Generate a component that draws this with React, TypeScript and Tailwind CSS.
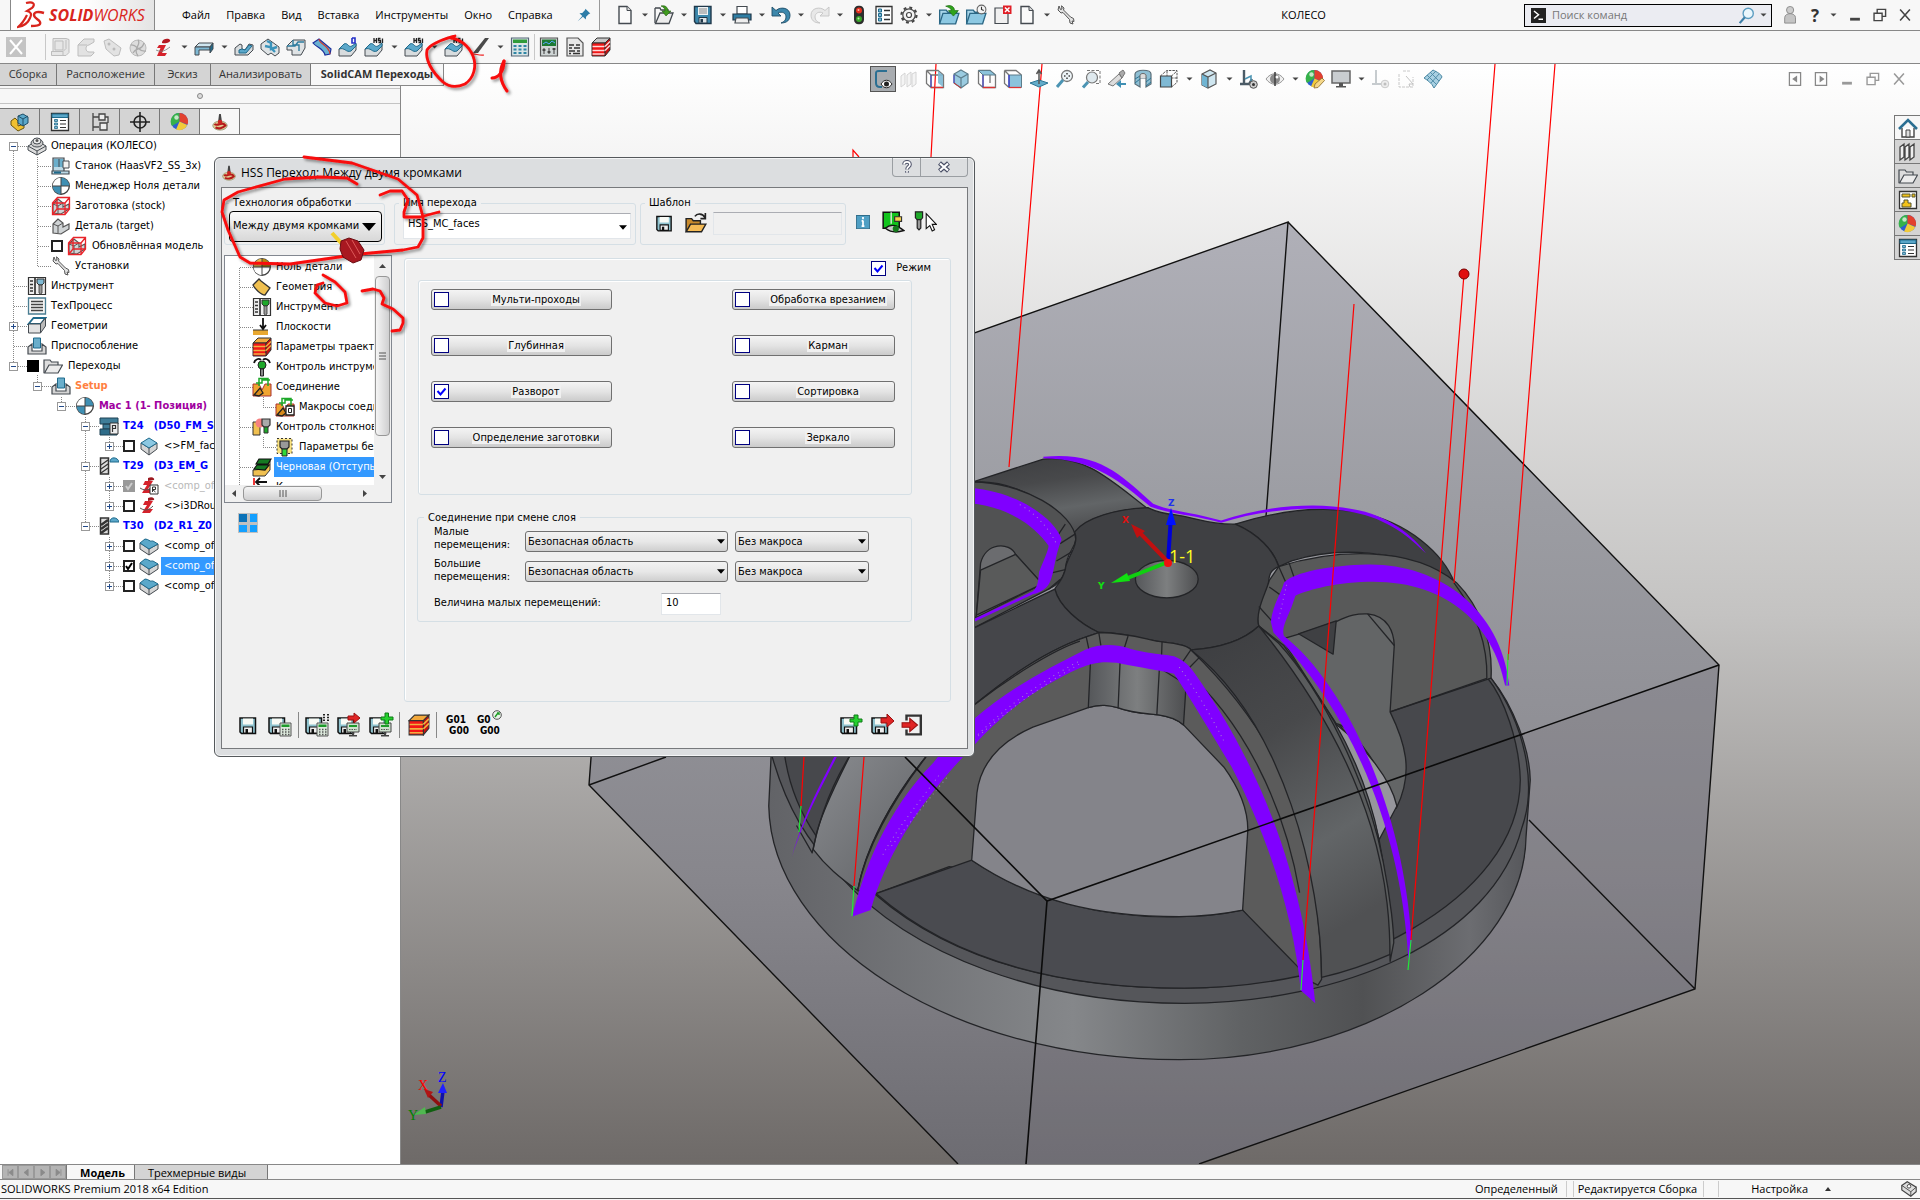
import type { ReactNode } from "react";

const UI = "font-['Open_Sans','Noto_Sans',sans-serif]";
const TAHOMA = "font-['DejaVu_Sans_Condensed','DejaVu_Sans',sans-serif]";

function Ic({ children, w = 20, className = "" }: { children: ReactNode; w?: number; className?: string }) {
  return (
    <svg viewBox="0 0 20 20" width={w} height={w} className={`shrink-0 ${className}`} aria-hidden="true">
      {children}
    </svg>
  );
}

function Caret({ className = "w-2" }: { className?: string }) {
  return (
    <svg viewBox="0 0 8 8" height={8} className={`shrink-0 ${className}`} aria-hidden="true">
      <path d="M1.5 2.5h6l-3 3z" fill="#444" />
    </svg>
  );
}

function Tool({ label, children }: { label: string; children: ReactNode }) {
  return (
    <button type="button" aria-label={label} className="flex shrink-0 items-center justify-center">
      {children}
    </button>
  );
}

const S = "#444a50";
const B = "#7fb9d4";
const D = "#1f6a8c";

/* ---------- toolbar glyphs ---------- */
const NewDoc = () => <Ic><path d="M4 1.5h8l4 4v13H4z" fill="#fafafa" stroke={S} strokeWidth="1.4" /><path d="M12 1.5v4h4" fill="#ddd" stroke={S} /></Ic>;
const OpenDoc = () => <Ic><path d="M1 3h5l1 2h7v3M1 3v15" fill="#eee" stroke={S} strokeWidth="1.3" /><path d="M1.5 18.5 6 8h13l-4 10.5z" fill="#ececec" stroke={S} strokeWidth="1.3" /><path d="M7 1c4-1 7 1 7 5h3l-5 5-4-5h3c0-2-1-4-4-5z" fill="#3f9a1d" stroke="#245c10" strokeWidth=".6" /></Ic>;
const Save = () => <Ic><path d="M1.5 1.5H18v17H3l-1.5-2z" fill="#3c87ab" stroke="#20384a" strokeWidth="1.4" /><path d="M5 2h10v8H5z" fill="#eef2f4" /><path d="M6 4h8M6 6h8M6 8h8" stroke="#888" /><path d="M6 12.5h8V18H6z" fill="#dfe5e8" stroke="#20384a" /><path d="M7.5 14H10v3.5H7.5z" fill="#20384a" /></Ic>;
const Print = () => <Ic><path d="M5 1.5h10V9H5z" fill="#fff" stroke={S} strokeWidth="1.2" /><path d="M1 9h18v6H1z" fill="#2f7ea4" stroke="#20384a" strokeWidth="1.2" /><path d="M4 13h12l1 5H3z" fill="#eee" stroke={S} strokeWidth="1.2" /></Ic>;
const Undo = () => <Ic><path d="M1 2v9h9L7 8c4-2 8 0 8 4 0 3-2 5-5 6 6 0 9-3 9-8C19 3 10 1 5 5.500z" fill="#3c87ab" stroke="#1d4d68" strokeWidth=".9" /></Ic>;
const Redo = () => <Ic className="scale-x-[-1]"><path d="M1 2v9h9L7 8c4-2 8 0 8 4 0 3-2 5-5 6 6 0 9-3 9-8C19 3 10 1 5 5.500z" fill="#e8e8e8" stroke="#c4c4c4" strokeWidth=".9" /></Ic>;
const Traffic = () => <Ic><rect x="5" y=".8" width="10" height="18.5" rx="4.5" fill="#2d2d2d" /><circle cx="10" cy="5.5" r="3" fill="#e8301f" /><circle cx="10" cy="14" r="3" fill="#3aa52a" /><circle cx="9.5" cy="5" r="1" fill="#ffb8a8" /><circle cx="9.5" cy="13.5" r="1" fill="#b8f0a8" /></Ic>;
const ListIc = () => <Ic><path d="M2 1.5h16v17H2z" fill="#fff" stroke="#333" strokeWidth="1.3" /><path d="M4.5 4h3v3h-3zM4.5 8.5h3v3h-3zM4.5 13h3v3h-3z" fill={B} stroke={D} /><path d="M10 5.5h6M10 10h6M10 14.5h6" stroke="#333" strokeWidth="1.3" /></Ic>;
const PropIc = () => <Ic><path d="M1.5 1.5h17v17h-17z" fill="#fff" stroke="#333" strokeWidth="1.3" /><path d="M2 2h16v3.5H2z" fill="#5aa6c8" stroke={D} /><path d="M4.5 7.5h3v2h-3zM4.5 11h3v2h-3zM4.5 14.5h3v2h-3z" fill={B} stroke={D} strokeWidth=".8" /><path d="M10 8.5h6M10 12h6M10 15.5h6" stroke="#333" strokeWidth="1.2" /></Ic>;
const Gear = () => <Ic><circle cx="10" cy="10" r="7.5" fill="none" stroke="#444" strokeWidth="2.2" strokeDasharray="2.9 3" /><circle cx="10" cy="10" r="6.2" fill="#f2f2f2" stroke="#444" strokeWidth="1.2" /><circle cx="10" cy="10" r="2.5" fill="#fff" stroke="#444" strokeWidth="1.2" /></Ic>;
const BlueFolder = ({ kind }: { kind: "arrow" | "clock" }) => (
  <Ic w={22}><path d="M1.5 18V5.5h6l1.5 2h8v3" fill="#a9d6ea" stroke="#2b6785" strokeWidth="1.2" /><path d="m1.5 18 3-9.5H19L16 18z" fill="#8cc8e2" stroke="#2b6785" strokeWidth="1.2" />
    {kind === "arrow" ? <path d="M7 2c4-1.5 8 0 8 4h3.5L14 11 9.500 6H12c0-2-2-3-5-4z" fill="#2fa31c" stroke="#1c6a10" strokeWidth=".6" /> : <g><circle cx="15" cy="5" r="4" fill="#f4f4f4" stroke="#666" /><path d="M15 2.5V5l2 1" fill="none" stroke="#333" /></g>}
  </Ic>
);
const CloseDoc = () => <Ic><path d="M3 3h13v15.5H3z" fill="#f0f0f0" stroke={S} strokeWidth="1.2" /><path d="M11 .5h8.5V9H11z" fill="#e01f26" /><path d="m13 2.5 4.500 4.500m0-4.500L13 7" stroke="#fff" strokeWidth="1.5" /></Ic>;
const Wrench = () => <Ic><path d="M3 1 2 5l3 3 2-.5 6.500 7 .5 3.500 3 1-1-3 2 .5-.5-3-3-1.500L7.500 5 8 3 5.500.8 6 4 4.500 4.500z" fill="#e2e2e2" stroke="#555" strokeWidth="1" /></Ic>;

/* ---------- CAM glyphs ---------- */
const GreyPart = ({ v }: { v: number }) => (
  <Ic>
    {v === 0 && <g><path d="M3 1.5h13l3 1v13l-3 3H1.500v-4H3z" fill="#e6e6e6" stroke="#bdbdbd" /><path d="M5 4h8v9H5zM1.500 14.500H13l3-3V3M13 14.500v4" fill="none" stroke="#bdbdbd" /></g>}
    {v === 1 && <path d="m2 8 6-6h10v3l-5 3c-4 0-4 7 0 7h5v1l-3 3H2zM2 8h9" fill="#e2e2e2" stroke="#bdbdbd" />}
    {v === 2 && <g><path d="M2 4 7 2l12 9-2 7-5 1-8-7z" fill="#e2e2e2" stroke="#bdbdbd" /><circle cx="7" cy="7" r="1.5" fill="#bbb" /><circle cx="12" cy="12" r="1.5" fill="#bbb" /></g>}
    {v === 3 && <g><circle cx="10" cy="11" r="8" fill="#ddd" stroke="#bbb" /><path d="M10 3c4 5-6 8 0 16M3 8c6-1 8 8 15 6M5 16c3-6 9-2 11-10" fill="none" stroke="#aaa" strokeWidth="1.3" /></g>}
  </Ic>
);
const RedI = () => <Ic><path d="M5 8h7l-4 8h5l-2 3H3l3.500-8H3z" fill="#d5222b" /><path d="M8 5c1-4 7-4 8-2s-4 4-8 3z" fill="#b31a22" /><path d="M2 13c6 3 10 0 14-3" stroke="#777" strokeWidth=".8" fill="none" /></Ic>;
const Slab = () => <Ic><path d="m1 10 4-4h14l-3 4z" fill="#cfe6f0" stroke={S} /><path d="M1 10h15v3H5v5H1z" fill={B} stroke={S} /><path d="m16 10 3-4v6l-3 4z" fill={D} stroke={S} /></Ic>;
const Pocket = ({ v }: { v: number }) => (
  <Ic>
    {v === 0 && <g><path d="M1 18v-7l5-4 2 1v4l3 1 4-6 4 1v5l-5 5z" fill="#d8dcde" stroke={S} /><path d="m5 13 3-1 3 1 4-5 3 1-6 7H5z" fill="#5ba8ca" stroke={D} /></g>}
    {v === 1 && <g><path d="m1 7 7-5 11 8v6l-4 3-4-3-3 2-7-6z" fill="#dfe3e5" stroke={S} /><path d="m7 4 4 2v6l6-2M5 9l5 1 5 5" fill="none" stroke="#3a93bb" strokeWidth="2.4" /></g>}
    {v === 2 && <g><path d="m1 9 6-6h12v8l-4 7H6v-5H1z" fill="#dfe3e5" stroke={S} /><path d="M7 3v5h6v6M1 9h8l3-4h6" fill="none" stroke="#2d7c9f" strokeWidth="1.4" /></g>}
    {v === 3 && <g><path d="m1 6 6-4 12 10-1 5-5 1C11 11 5 11 1 6z" fill="#69b1d1" stroke="#1b2f9c" strokeWidth="1.2" /><path d="M7 2c0 5 10 6 11 15" fill="none" stroke="#d03c30" strokeWidth="1.2" /></g>}
  </Ic>
);
const Wave = ({ tag }: { tag?: string }) => (
  <Ic>
    <path d="m1 12 5-4c4-1 3 5 7 4l5-5v6l-5 6H1z" fill="#d8dcde" stroke={S} />
    <path d="m1 12 5-5c4-2 4 4 8 2l4-3v3l-5 5c-5 2-6-4-12-2z" fill="#5ba8ca" stroke={D} />
    {tag === "b" ? <path d="M14 1v5h3V1h-3" fill="none" stroke="#2330c8" strokeWidth="1.6" /> : <path d="M10 1v5M12.5 1v5M10 3.5h2.5M16.5 1.5h-2v2h2v2h-2M18.5 6V1.5" fill="none" stroke="#222" strokeWidth="1.3" />}
  </Ic>
);
const Pen = () => <Ic><path d="M15 1h4L8 16H3z" fill="#4a4a4a" /><path d="M1 17c5-1 7 2 13 1" stroke="#e22" strokeWidth="1.2" fill="none" /></Ic>;
const Calc = () => <Ic><path d="M1.5 1h17v18h-17z" fill="#d9e4e6" stroke="#567" strokeWidth="1.2" /><path d="M3 2.5h14V6H3z" fill="#2f9b3a" /><path d="M3.5 9h13M3.5 12.5h13M3.5 16h13" stroke="#2f86a5" strokeWidth="2.2" strokeDasharray="3 2" /></Ic>;
const Sim = () => <Ic><path d="M1.5 1h17v18h-17z" fill="#cfd5d5" stroke="#555" strokeWidth="1.2" /><path d="M3 2.5h14V9H3z" fill="#1d7a34" /><path d="m4 7 3-2 3 2 3-3 3 2" stroke="#57a7ff" fill="none" /><path d="M5 11v6M10 11v6M15 11v6" stroke="#555" strokeWidth="1.2" /><path d="M3.5 13h3M8.5 15h3M13.5 12h3" stroke="#333" strokeWidth="1.5" /></Ic>;
const GCode = () => <Ic><path d="M2 1h11l5 5v13H2z" fill="#e8e8e8" stroke="#555" strokeWidth="1.2" /><path d="M4 8h5M11 8h4M4 11h3M9 11h6M4 14h6M12 14h3M4 16.5h2M8 16.5h7" stroke="#333" strokeWidth="1.7" /></Ic>;
const Stack = ({ gold = false, w = 20 }: { gold?: boolean; w?: number }) => (
  <Ic w={w}><path d="m1 6 5-5h13l-5 5z" fill={gold ? "#f3a93c" : "#c8c8c8"} stroke="#333" /><path d="M1 6h13v13H1z" fill="#f21616" stroke="#333" /><path d="m14 6 5-5v12l-5 6z" fill="#c80f0f" stroke="#333" /><path d="M1.5 9.5h12m0 4h-12m12 3.500h-12m12.500-7.500 5-5m-5 9 5-5" stroke={gold ? "#f0b040" : "#ffd8d8"} strokeWidth="1.5" /></Ic>
);

/* ---------- heads-up view glyphs ---------- */
const Cube = ({ v }: { v: number }) => (
  <Ic>
    {v === 0 && <path d="m2 7 4-3v11l-4 3zM8 6l4-3v12l-4 3zM13 5l4-2v12l-4 3z" fill="#f4f4f4" stroke="#d4d4d4" />}
    {v === 1 && <g><path d="M1.5 1.5H13L18.5 6v12.5H6V6h12M1.5 1.5v13L6 18.5M1.5 1.5 6 6" fill="none" stroke="#777" strokeWidth="1.3" /><path d="m13 2 5 4v12l-5-4z" fill="#7fb9d4" opacity=".9" /><path d="M6 6v12" stroke="#33c" /><path d="M6 18.5h12" stroke="#d33" strokeWidth="1.3" /></g>}
    {v === 2 && <g><path d="m10 1 7 4v9l-7 5-7-5V5z" fill="#9acbe0" stroke="#5d7d8b" strokeWidth="1.2" /><path d="m3 5 7 4 7-4M10 9v10" fill="none" stroke="#5d7d8b" strokeWidth="1.2" /><path d="M3 14V6" stroke="#44c" /><path d="m3 14 7 5" stroke="#c33" /></g>}
    {v === 3 && <g><path d="M1.5 1.5H13L18.5 6v12.5H6V6M13 2v12M1.5 1.5v13L6 18.5" fill="none" stroke="#777" strokeWidth="1.3" /><path d="M1.5 1.5H13L18.5 6H6z" fill="#8cc3dc" stroke="#5d7d8b" /><path d="M6 18.5h12" stroke="#d33" strokeWidth="1.3" /><path d="M6 6v12" stroke="#33c" /></g>}
    {v === 4 && <g><path d="M1.5 1.5H13L18.5 6M1.5 1.5v13L6 18.5M1.5 1.5 6 6" fill="none" stroke="#777" strokeWidth="1.3" /><path d="M6 6h12.5v12.5H6z" fill="#8cc3dc" stroke="#5d7d8b" /><path d="M6 18.5h12" stroke="#d33" strokeWidth="1.3" /><path d="M6 6v12" stroke="#33c" strokeWidth="1.3" /></g>}
    {v === 5 && <g><path d="m1 14 9-3 9 3-9 4z" fill="#63acca" stroke="#2d7594" /><path d="M10 15V2M7.5 5 10 1l2.500 4" fill="none" stroke="#555" strokeWidth="1.5" /></g>}
    {v === 6 && <g><circle cx="12" cy="7" r="5.5" fill="#eef5f8" stroke="#777" strokeWidth="1.3" /><path d="M12 4v1.500M12 8.500V10M9 7h1.500M13.500 7H15" stroke="#444" strokeWidth="1.6" /><path d="m8 11-6 7" stroke="#4b94b3" strokeWidth="3" /></g>}
    {v === 7 && <g><path d="M6 1.5h13v13h-5" fill="none" stroke="#777" strokeDasharray="3 1.5" /><circle cx="11" cy="8.5" r="5.5" fill="#dfe9ee" stroke="#777" strokeWidth="1.2" /><path d="m7 13-5 5.500" stroke="#4b94b3" strokeWidth="3" /></g>}
    {v === 8 && <g><path d="m1 15 11-10 3 4-9 8z" fill="#ddd" stroke="#777" /><path d="m12 4 4-3 2 3-3 5z" fill="#aaa" stroke="#777" /><path d="M19 14h-5v-3l-5 4 5 4v-3h5z" fill="#3f8fb3" /></g>}
    {v === 9 && <g><path d="M2 5c0-5 16-5 16 0v10l-5 3V9H7v9l-5-3z" fill="#8ebfd4" stroke="#5b6e78" strokeWidth="1.2" /><path d="m2 10 5-3M2 14l5-4M13 13l5-4M13 17l5-4" stroke="#2d7594" /><path d="M7 9V6c1-2 5-2 6 0v3" fill="#ddd" stroke="#666" /></g>}
    {v === 10 && <g><path d="M1.5 7h11v11h-11z" fill="#7fb9d4" stroke="#444" strokeWidth="1.2" /><path d="m1.5 7 6-5.500H18v12L12.500 18M12.500 7 18 2M8 2v5M12 9h6" fill="none" stroke="#555" strokeDasharray="2.5 1" /></g>}
    {v === 11 && <g><path d="M3 5 11 1l6 3v11l-8 4-6-3z" fill="#cfe6f0" stroke="#555" strokeWidth="1.2" /><path d="M3 5 9 8v11l-6-3z" fill="#6fb4d2" /><path d="m3 5 6 3 8-4M9 8v11" fill="none" stroke="#555" strokeWidth="1.2" /></g>}
    {v === 12 && <g><path d="M5 1v14M1 15h9l3-5" fill="none" stroke="#4b5b66" strokeWidth="2.4" /><path d="m6 10 6-3v5" fill="none" stroke="#4b94b3" strokeWidth="1.5" /><circle cx="14.5" cy="15.5" r="3.8" fill="#ccc" stroke="#555" /><circle cx="14.5" cy="15.5" r="1.5" fill="#333" /></g>}
    {v === 13 && <g><path d="M1 10c5-7 13-7 18 0-5 7-13 7-18 0z" fill="#efefef" stroke="#999" /><circle cx="10" cy="10" r="5" fill="#8a8a8a" /><path d="M10 3v14" stroke="#444" strokeWidth="1.6" /><circle cx="12" cy="8" r="1.5" fill="#fff" /></g>}
    {v === 15 && <g><path d="M1 2h18v12H1z" fill="#c9cdd0" stroke="#666" strokeWidth="1.5" /><path d="M8 14h4v3h3v1.500H5V17h3z" fill="#555" /></g>}
    {v === 16 && <g opacity=".3"><path d="M5 1v14M1 15h9" fill="none" stroke="#4b5b66" strokeWidth="2" /><circle cx="14" cy="15" r="3.8" fill="#ccc" stroke="#555" /><circle cx="14" cy="15" r="1.5" fill="#333" /></g>}
    {v === 17 && <g opacity=".35"><path d="M2 5v13h14V8M6 2h8" fill="none" stroke="#666" strokeDasharray="3 1" /><path d="m9 7 7 8h-4l1 3" fill="#fff" stroke="#555" /></g>}
    {v === 18 && <g><path d="M10 1c4 2 8 4 9 7l-8 11C9 14 4 11 1 9z" fill="#a8d0e2" stroke="#4b88a3" /><path d="m4 6 10 10M7 3l9 9M13 2 4 11M16 5l-8 9" stroke="#4b88a3" strokeWidth=".9" /></g>}
  </Ic>
);
const Ball = ({ pencil = false }: { pencil?: boolean }) => (
  <Ic><circle cx="9.5" cy="9.5" r="8.5" fill="#2e5fd0" /><path d="M9.5 1v8.500L2 14A8.500 8.500 0 0 1 9.500 1z" fill="#36b24a" /><path d="M9.500 1v8.500l8 3A8.500 8.500 0 0 0 9.500 1z" fill="#e2412f" /><path d="M9.500 9.500 6 17.400a8.500 8.500 0 0 0 11.300-4.500z" fill="#f2cb3a" /><circle cx="6.5" cy="5.5" r="2.2" fill="#fff" opacity=".7" />
    {pencil && <path d="m9 19 1-4 7-6 2.500 2.500-6.500 7z" fill="#f5d88a" stroke="#8a6a2a" strokeWidth=".8" />}
  </Ic>
);

/* ---------- tree glyphs ---------- */
const Quad = ({ gold = false }: { gold?: boolean }) => <Ic><circle cx="10" cy="10" r="8.3" fill="#fff" stroke="#444" strokeWidth="1.4" /><path d="M10 10V1.700A8.300 8.300 0 0 0 1.700 10z" fill={gold ? "#e6b84a" : "#fff"} /><path d="M10 10V1.700A8.300 8.300 0 0 1 18.300 10z" fill={gold ? "#b8860b" : "#3f8fb3"} /><path d="M10 10v8.300A8.300 8.300 0 0 1 1.700 10z" fill={gold ? "#fff" : "#3f8fb3"} /><path d="M10 1.500v17M1.500 10h17" stroke="#444" /></Ic>;
const OpIc = () => <Ic><path d="M1 10 10 5l9 5v4l-9 5-9-5z" fill="#ddd" stroke={S} /><path d="m1 10 9 5 9-5M10 15v4" fill="none" stroke={S} /><ellipse cx="10" cy="7" rx="6" ry="4" fill="#ccc" stroke={S} /><ellipse cx="10" cy="5" rx="4" ry="3" fill="#eee" stroke={S} /><circle cx="10" cy="4.5" r="1.5" fill="#555" /></Ic>;
const Machine = () => <Ic><path d="M2 2h11v13H2zM1 15h17v3H1z" fill="#bcd9e6" stroke={S} strokeWidth="1.2" /><path d="M3 3h9v8H3z" fill="#6aaecb" /><path d="M8 3v8M12 5h6v7h-6z" fill="#f2f2f2" stroke={S} /><path d="M3 16.500h7" stroke={D} strokeWidth="2" /></Ic>;
const Stock = ({ red = false }: { red?: boolean }) => <Ic><path d="m2 8 5-5 5 4v4l6-3v5l-8 5-8-1z" fill="#cfd3d5" stroke="#555" strokeWidth="1.2" /><path d="m2 8 5 2v7M7 10l5-3" fill="none" stroke="#555" />{red && <path d="m1.500 7 5-5.500h12V13L14 18.500H1.500zM1.500 7H14v11M14 7l4.500-5.500M6 2v11l-4 5m4-5h12" fill="none" stroke="#e8242a" strokeWidth="1.3" />}</Ic>;
const ToolIc = ({ c = B }: { c?: string }) => <Ic><path d="M1.500 1.500h17v17h-17z" fill="#eee" stroke="#333" strokeWidth="1.2" /><path d="M8 2v16M3 5h3M3 8.500h3M3 12h3M3 15h3" stroke="#333" strokeWidth="1.7" /><path d="M10 3h7v4l-2 2h-3l-2-2z" fill={c} stroke="#333" /><path d="M12 9h3v8l-1.500 1L12 17z" fill="#999" stroke="#333" strokeWidth=".8" /></Ic>;
const Tech = () => <Ic><path d="M1.500 2h17v16h-17z" fill="#f4f4f4" stroke="#4a7d92" strokeWidth="1.3" /><path d="M4 5.500h12M4 8.500h12M4 11.500h12M4 14.500h12" stroke="#444" strokeWidth="1.3" /></Ic>;
const Geo = () => <Ic><path d="m1.500 8 5-6h12l-5 6z" fill="#fff" stroke={D} strokeWidth="1.8" /><path d="M1.500 8h12v9h-12z" fill="#e2e2e2" stroke={S} /><path d="m13.500 8 5-6v8l-5 7z" fill="#bbb" stroke={S} /></Ic>;
const Fixture = () => <Ic><path d="M1 18v-7l4-3v7h10V8l4 3v7z" fill="#d5d5d5" stroke={S} strokeWidth="1.2" /><path d="M6.500 2h7v10h-7z" fill="#6aaecb" stroke={D} /></Ic>;
const FolderIc = () => <Ic><path d="M1 17V4h6l1.500 2H15v3" fill="#ddd" stroke={S} strokeWidth="1.2" /><path d="M1.500 17 6 9h13.500L15 17z" fill="#ececec" stroke={S} strokeWidth="1.2" /></Ic>;
const Face = ({ curved = false }: { curved?: boolean }) => <Ic>{curved ? <g><path d="m1 7 9 6 9-5v5l-9 6-9-6z" fill="#d5d5d5" stroke={S} /><path d="m1 7 5-4c4 0 4 3 8 2l5 3-9 5z" fill="#5ba8ca" stroke={D} /><path d="M10 13v6" stroke={S} /></g> : <g><path d="m2 7 8 5 8-5v6l-8 6-8-6z" fill="#d5d5d5" stroke={S} /><path d="m2 7 8-5 8 5-8 5z" fill="#8cc8e2" stroke={D} /><path d="M10 12v7" stroke={S} /></g>}</Ic>;
const Mill = ({ kind }: { kind: "face" | "end" | "ball" }) => (
  <Ic>
    {kind === "face" ? <g><path d="M1 2h18v6H1zM4 8h12v5H4z" fill="#3f7d98" stroke="#1e4355" /><path d="M1 13h17v6H1z" fill="#2f6d8a" stroke="#1e4355" /><path d="M11 7h8v11h-8z" fill="#eee" stroke="#333" /><path d="M13.500 16V9.500h3v3h-3" fill="none" stroke="#333" strokeWidth="1.2" /></g> : <g><path d="M1.500 2h8v16h-8z" fill="#ddd" stroke="#333" strokeWidth="1.5" /><path d="m2 9 7-5M2 13l7-5M2 17l7-5" stroke="#333" strokeWidth={kind === "ball" ? 2.4 : 1.2} /><path d="M11 6c0-6 8-5 9 0z" fill="#5ba8ca" stroke={D} /></g>}
  </Ic>
);
const IMill = ({ r = false }: { r?: boolean }) => <Ic><path d="M6 5h8l-5 8h5l-3 4H3l5-8H4z" fill="#d5222b" /><path d="M9 2c4-2 7 0 6 2l-6 1z" fill="#9d1a22" /><path d="M1 12c6 4 10 1 13-2" stroke="#555" fill="none" />{r && <g><path d="M11 9h8v9h-8z" fill="#fff" stroke="#333" /><path d="M13.500 16v-5h3v2.500h-3l3 2.500" fill="none" stroke="#333" /></g>}</Ic>;
const Drill = ({ w = 18 }: { w?: number }) => <Ic w={w}><path d="M9 1h2l1 8H8z" fill="#444" /><ellipse cx="10" cy="14" rx="8" ry="5" fill="#e0c890" stroke="#997" /><path d="M4 12c3 4 9-4 12 2-3 3-8 4-11 2" fill="none" stroke="#b31a1a" strokeWidth="2.4" /><circle cx="10" cy="10" r="2.5" fill="#c22" /></Ic>;

const Sheet = () => <Ic><path d="m1 8 6-6 2 2 9 7-5 7c-4 0-10-6-12-10z" fill="#f0c050" stroke="#333" strokeWidth="1.3" /></Ic>;
const Plane = () => <Ic><path d="M1 13h15v5H1z" fill="#e8a830" /><path d="M1 13h15" stroke="#333" /><path d="M11 1v10M8 8l3 4 3-4" fill="none" stroke="#111" strokeWidth="1.8" /></Ic>;
const ToolCtl = () => <Ic><path d="M2 6c1-4 5-5 7-3M18 6c-1-4-5-5-7-3" fill="none" stroke="#111" strokeWidth="1.8" /><circle cx="10" cy="8" r="4" fill="#1ea82a" stroke="#222" /><path d="M8.500 12h3v7h-3z" fill="#888" stroke="#222" /></Ic>;
const Link = ({ d = false }: { d?: boolean }) => <Ic><path d="M1 7h6l3 6 3-6h6v12H1z" fill="#f0a530" stroke="#a33" /><path d="m2 18 6-7 3 5-4 3z" fill="#d98b1b" stroke="#222" strokeWidth="1.3" /><path d="M4 6h6V3h8M7 9V1.500h9V9" fill="none" stroke="#1ea82a" strokeWidth="1.5" />{d && <g><path d="M11 9h8v9h-8z" fill="#fff" stroke="#222" strokeWidth="1.3" /><path d="M13.500 11.500h3v4h-3z" fill="none" stroke="#222" /></g>}</Ic>;
const Coll = () => <Ic><path d="M1 5h7v13H1z" fill="#f0c050" stroke="#333" /><circle cx="8" cy="6" r="4.5" fill="#f58080" /><path d="M10 2h8v6l-2 2h-4l-2-2z" fill="#aaa" stroke="#333" strokeWidth="1.2" /><path d="M12 10h4v6h-4z" fill="#1ea82a" stroke="#333" /></Ic>;
const Safe = () => <Ic><path d="M2 1.500h15v15H2z" fill="#f7e080" stroke="#333" strokeDasharray="2 2" /><path d="M5 4h9v6l-2 2H7l-2-2z" fill="#999" stroke="#222" strokeWidth="1.2" /><path d="M7 12h5v7H7z" fill="#2ed83a" stroke="#222" /></Ic>;
const Rough = () => <Ic><path d="m1 13 12-1 5-8v9l-5 6H1z" fill="#f0c050" stroke="#333" /><path d="m4 7 3-5h12l-3 5zM2 12l3-4h12l-4 5z" fill="#157a22" stroke="#111" strokeWidth="1.2" /></Ic>;
const Exit = () => <Ic><path d="M2 1v10" stroke="#e22" strokeWidth="1.8" /><path d="M4 5h11M8 1 4 5l4 4" fill="none" stroke="#111" strokeWidth="1.8" /></Ic>;

/* ---------- dialog glyphs ---------- */
const Disk = ({ extra, w = 18 }: { extra?: "plus" | "arrow" | "calc" | "calcd" | "monArrow" | "monPlus"; w?: number }) => (
  <svg viewBox="0 0 26 26" width={w + 8} height={26} className="shrink-0" aria-hidden="true">
    <path d="M2 6h15.500v15.500H3.500L2 20z" fill="#8fc3cf" stroke="#111" strokeWidth="1.5" />
    <path d="M5 6.500h10v6H5z" fill="#f8faf5" />
    <path d="M5.500 15h9v6h-9z" fill="#eee" stroke="#111" strokeWidth="1.2" />
    <path d="M7.500 17H10v4H7.500z" fill="#111" />
    {extra === "plus" && <path d="M15 3h4v4h4v3h-4v4h-4v-4h-4V7h4z" fill="#25d02e" stroke="#117a18" />}
    {extra === "arrow" && <path d="M11 6h6V2l7 7-7 6v-4h-6z" fill="#e02525" stroke="#911" />}
    {(extra === "calc" || extra === "calcd") && <g><path d="M13 11h11v13H13z" fill="#dce8dc" stroke="#555" /><path d="M14.500 12.500h8v2.500h-8z" fill="#1f9a2c" /><path d="M15 17.500h8M15 20h8M15 22.500h8" stroke="#555" strokeWidth="1.3" strokeDasharray="1.5 1.5" /></g>}
    {extra === "calcd" && <path d="M20 2v8M24 2v8" stroke="#222" strokeDasharray="1.5 1.2" strokeWidth="2" />}
    {(extra === "monArrow" || extra === "monPlus") && <g><path d="M11 11h12v9H11z" fill="#cde0cd" stroke="#444" /><path d="M13 13h8v2h-8z" fill="#1f9a2c" /><path d="M13 17.500h8" stroke="#555" strokeDasharray="1.5 1" /><path d="M16 20h2v3h3v1.500h-8V23h3z" fill="#444" /></g>}
    {extra === "monArrow" && <path d="M12 4h6V1l6 5-6 5V8h-6z" fill="#e02525" stroke="#911" />}
    {extra === "monPlus" && <path d="M17 1h3.500v4H25v3h-4.500v4H17V8h-4V5h4z" fill="#25d02e" stroke="#117a18" />}
  </svg>
);

/* ---------- feature tree ---------- */
type Row = { lvl: number; t: string; icon: ReactNode; exp?: "+" | "-"; chk?: "off" | "on" | "fill" | "grey"; cls?: string };
const rows: Row[] = [
  { lvl: 0, exp: "-", t: "Операция (КОЛЕСО)", icon: <OpIc /> },
  { lvl: 1, t: "Станок (HaasVF2_SS_3x)", icon: <Machine /> },
  { lvl: 1, t: "Менеджер Ноля детали", icon: <Quad /> },
  { lvl: 1, t: "Заготовка (stock)", icon: <Stock red /> },
  { lvl: 1, t: "Деталь (target)", icon: <Stock /> },
  { lvl: 1, chk: "off", t: "Обновлённая модель", icon: <Stock red /> },
  { lvl: 1, t: "Установки", icon: <Wrench /> },
  { lvl: 0, t: "Инструмент", icon: <ToolIc /> },
  { lvl: 0, t: "ТехПроцесс", icon: <Tech /> },
  { lvl: 0, exp: "+", t: "Геометрии", icon: <Geo /> },
  { lvl: 0, t: "Приспособление", icon: <Fixture /> },
  { lvl: 0, exp: "-", chk: "fill", t: "Переходы", icon: <FolderIc /> },
  { lvl: 1, exp: "-", t: "Setup", icon: <Fixture />, cls: "font-bold text-[#ff8040]" },
  { lvl: 2, exp: "-", t: "Mac 1 (1- Позиция)", icon: <Quad />, cls: "font-bold text-[#a000a0]" },
  { lvl: 3, exp: "-", t: "T24   (D50_FM_S", icon: <Mill kind="face" />, cls: "font-bold text-[#0000ff]" },
  { lvl: 4, exp: "+", chk: "off", t: "<>FM_fac", icon: <Face /> },
  { lvl: 3, exp: "-", t: "T29   (D3_EM_G", icon: <Mill kind="end" />, cls: "font-bold text-[#0000ff]" },
  { lvl: 4, exp: "+", chk: "grey", t: "<comp_of", icon: <IMill r />, cls: "text-[#b8b8b8]" },
  { lvl: 4, exp: "+", chk: "off", t: "<>i3DRou", icon: <IMill /> },
  { lvl: 3, exp: "-", t: "T30   (D2_R1_Z0", icon: <Mill kind="ball" />, cls: "font-bold text-[#0000ff]" },
  { lvl: 4, exp: "+", chk: "off", t: "<comp_of", icon: <Face curved /> },
  { lvl: 4, exp: "+", chk: "on", t: "<comp_of", icon: <Face curved />, cls: "bg-[#3399ff] text-white" },
  { lvl: 4, exp: "+", chk: "off", t: "<comp_of", icon: <Face curved /> },
];
const PAD = ["pl-[9px]", "pl-[33px]", "pl-[57px]", "pl-[81px]", "pl-[105px]"];

function FeatureTree() {
  return (
    <div className={`relative flex-1 overflow-hidden bg-white text-[11px] ${TAHOMA}`}>
      <svg className="absolute left-0 top-0" width="200" height="480" aria-hidden="true">
        <g fill="none" stroke="#888" strokeDasharray="1 1">
          <path d="M13.500 12v220M37.500 22v110M37.500 240v12M61.500 262v12M85.500 282v110M109.500 302v12M109.500 342v32M109.500 402v52" />
          <path d="M18 11.500h9M38 31.500h14M38 51.500h14M38 71.500h14M38 91.500h14M38 111.500h12M38 131.500h14M14 151.500h13M14 171.500h13M18 191.500h9M14 211.500h13M18 231.500h9M42 251.500h9M66 271.500h9M90 291.500h9M114 311.500h9M90 331.500h9M114 351.500h9M114 371.500h9M90 391.500h9M114 411.500h9M114 431.500h9M114 451.500h9" />
        </g>
      </svg>
      <ul className="relative pt-px">
        {rows.map((r, i) => (
          <li key={i} className={`flex h-5 items-center whitespace-pre ${PAD[r.lvl]}`}>
            <span className="mr-[9px] flex w-[9px] shrink-0">
              {r.exp && (
                <button type="button" aria-label={r.exp === "+" ? "Развернуть" : "Свернуть"} className="flex size-[9px] items-center justify-center border border-[#999] bg-white">
                  <svg viewBox="0 0 5 5" width="5" height="5"><path d={r.exp === "+" ? "M0 2.500h5M2.500 0v5" : "M0 2.500h5"} stroke="#224a8a" /></svg>
                </button>
              )}
            </span>
            {r.chk && (
              <label className="relative mr-1 flex size-3 shrink-0">
                <input type="checkbox" aria-label={r.t} defaultChecked={r.chk !== "off"} className={`size-3 appearance-none ${r.chk === "fill" ? "border-2 border-black bg-black" : r.chk === "grey" ? "border-2 border-[#999] bg-[#999]" : "border-2 border-[#222] bg-white"}`} />
                {(r.chk === "on" || r.chk === "grey") && <svg viewBox="0 0 12 12" className="pointer-events-none absolute inset-0"><path d="m3 6 2 3 4-6" fill="none" stroke={r.chk === "on" ? "#000" : "#ccc"} strokeWidth="2" /></svg>}
              </label>
            )}
            {r.icon}
            <span className={`px-[3px] leading-[18px] ${r.cls ?? "text-black"} ${r.chk ? "ml-0.5" : "ml-px"}`}>{r.t}</span>
          </li>
        ))}
      </ul>
    </div>
  );
}

/* ---------- dialog pieces ---------- */
function Group({ title, children, className = "", legend = "ml-1" }: { title: string; children: ReactNode; className?: string; legend?: string }) {
  return (
    <fieldset className={`min-w-0 rounded-[3px] border border-[#d5dfe5] ${className}`}>
      <legend className={`px-1 text-[11px] leading-[14px] ${legend}`}>{title}</legend>
      {children}
    </fieldset>
  );
}

function Combo({ value, label, className = "", big = false, white = false }: { value: string; label: string; className?: string; big?: boolean; white?: boolean }) {
  const look = white
    ? "h-[26px] border-[#e2e6ea] border-t-[#abadb3] bg-white pb-1 pl-1 border"
    : big
      ? "h-[31px] rounded border border-black bg-linear-to-b from-[#fafafa] to-[#d8d8d8] pl-[3px]"
      : "h-[21px] rounded-[3px] border-[#707070] bg-linear-to-b from-[#f2f2f2] via-[#e8e8e8] to-[#cfcfcf] pl-0.5 border";
  return (
    <div className={className}>
      <div className="relative">
        <select aria-label={label} defaultValue={value} className={`block w-full appearance-none text-[11px] text-black outline-none ${look}`}>
          <option>{value}</option>
        </select>
        <svg viewBox="0 0 14 8" width={big ? 14 : 8} height={big ? 8 : 5} className={`pointer-events-none absolute ${big ? "right-1.5 top-3" : white ? "right-1 top-3" : "right-[3px] top-2"}`}><path d="M0 0h14L7 8z" /></svg>
      </div>
    </div>
  );
}

function Tick({ on, label }: { on?: boolean; label: string }) {
  return (
    <span className="relative flex size-[15px] shrink-0">
      <input type="checkbox" aria-label={label} defaultChecked={on} className="peer size-[15px] appearance-none border border-[#000080] bg-white" />
      <svg viewBox="0 0 15 15" className="pointer-events-none absolute inset-0 hidden peer-checked:block"><path d="m3.500 7 3 3.500 5-6" fill="none" stroke="#0000ff" strokeWidth="2" /></svg>
    </span>
  );
}

function Option({ t, on }: { t: string; on?: boolean }) {
  return (
    <div className="flex h-[21px] items-center rounded-[3px] border border-[#707070] bg-linear-to-b from-[#f4f4f4] via-[#e4e4e4] to-[#cbcbcb] pl-0.5">
      <Tick on={on} label={t} />
      <button type="button" className="flex-1 whitespace-nowrap pl-3 text-center text-[11px] leading-[15px]"><span className="bg-[#f0f0f0] px-px">{t}</span></button>
    </div>
  );
}

const steps: { t: string; icon: ReactNode; sub?: boolean; sel?: boolean }[] = [
  { t: "Ноль детали", icon: <Quad gold /> },
  { t: "Геометрия", icon: <Sheet /> },
  { t: "Инструмент", icon: <ToolIc c="#1ea82a" /> },
  { t: "Плоскости", icon: <Plane /> },
  { t: "Параметры траект", icon: <Stack gold /> },
  { t: "Контроль инструме", icon: <ToolCtl /> },
  { t: "Соединение", icon: <Link /> },
  { t: "Макросы соеди", icon: <Link d />, sub: true },
  { t: "Контроль столкнов", icon: <Coll /> },
  { t: "Параметры без", icon: <Safe />, sub: true },
  { t: "Черновая (Отступы", icon: <Rough />, sel: true },
  { t: "К", icon: <Exit /> },
];

function StepTree() {
  return (
    <div className="grid h-[248px] w-[168px] shrink-0 grid-cols-[minmax(0,1fr)_17px] grid-rows-[minmax(0,1fr)_17px] border border-[#828790] bg-white">
      <div className="relative overflow-hidden pt-px">
        <svg className="absolute left-0 top-0" width="60" height="232" aria-hidden="true">
          <path d="M14.500 12v220M38.500 141v11M38.500 181v11M15 11.500h13M15 31.500h13M15 51.500h13M15 71.500h13M15 91.500h13M15 111.500h13M15 131.500h13M38 151.500h13M15 171.500h13M38 191.500h13M15 211.500h13" fill="none" stroke="#888" strokeDasharray="1 1" />
        </svg>
        <ul className="relative">
          {steps.map((s) => (
            <li key={s.t} className={`flex h-5 items-center whitespace-nowrap ${s.sub ? "pl-[50px]" : "pl-[27px]"}`}>
              {s.icon}
              <span className={`ml-0.5 flex h-5 flex-1 items-center pl-0.5 ${s.sel ? "bg-[#3399ff] text-white" : ""}`}>{s.t}</span>
            </li>
          ))}
        </ul>
      </div>
      <div className="flex flex-col items-center bg-[#f0f0f0]">
        <svg viewBox="0 0 7 4" width="7" height="20" className="shrink-0"><path d="M0 4 3.500 0 7 4z" fill="#444" /></svg>
        <div className="flex h-[160px] w-[15px] items-center justify-center rounded-sm border border-[#979797] bg-linear-to-r from-[#f5f5f5] to-[#cfcfd0]">
          <svg width="7" height="8"><path d="M0 1h7M0 4h7M0 7h7" stroke="#555" /></svg>
        </div>
        <div className="flex-1" />
        <svg viewBox="0 0 7 4" width="7" height="16" className="shrink-0"><path d="M0 0h7L3.500 4z" fill="#444" /></svg>
      </div>
      <div className="flex items-center bg-[#f0f0f0]">
        <svg viewBox="0 0 4 7" width="18" height="7" className="shrink-0"><path d="M4 0v7L0 3.500z" fill="#444" /></svg>
        <div className="flex h-[15px] w-[79px] items-center justify-center rounded-sm border border-[#979797] bg-linear-to-b from-[#f5f5f5] to-[#cfcfd0]">
          <svg width="8" height="7"><path d="M1 0v7M4 0v7M7 0v7" stroke="#555" /></svg>
        </div>
        <div className="flex-1" />
        <svg viewBox="0 0 4 7" width="18" height="7" className="shrink-0"><path d="M0 0v7l4-3.500z" fill="#444" /></svg>
      </div>
      <div className="bg-[#f0f0f0]" />
    </div>
  );
}

function Dialog() {
  return (
    <section role="dialog" aria-label="HSS Переход" className={`absolute left-[214px] top-[157px] z-20 flex h-[600px] w-[761px] flex-col rounded-md border border-[#55595c] bg-[#dcdee0] px-1.5 pb-[7px] text-[11px] text-black shadow-[inset_0_0_0_1px_#f4f5f6] ${TAHOMA}`}>
      <header className={`flex h-[29px] shrink-0 items-start ${UI}`}>
        <div className="flex h-full items-center gap-1 text-[12px]"><Drill w={16} /><h1>HSS Переход: Между двумя кромками</h1></div>
        <div className="ml-auto flex h-[19px] rounded-b border border-t-0 border-[#9a9ea2]">
          <button type="button" aria-label="Справка" className="flex w-7 items-center justify-center border-r border-[#9a9ea2]">
            <svg viewBox="0 0 12 14" width="12" height="14"><path d="M3 4.500C3 1 9 1 9 4.500 9 7 6 6.500 6 9.500M6 11v1.800" fill="none" stroke="#4a4f66" strokeWidth="3.600" /><path d="M3 4.500C3 1 9 1 9 4.500 9 7 6 6.500 6 9.500M6 11v1.800" fill="none" stroke="#fff" strokeWidth="1.600" /></svg>
          </button>
          <button type="button" aria-label="Закрыть" className="flex w-[46px] items-center justify-center">
            <svg viewBox="0 0 14 12" width="14" height="12"><path d="m2.500 2 9 8m0-8-9 8" stroke="#4a4f66" strokeWidth="4.400" /><path d="m3 2.500 8 7m0-7-8 7" stroke="#fff" strokeWidth="2.200" /></svg>
          </button>
        </div>
      </header>
      <div className="flex min-h-0 flex-1 flex-col border border-[#77797c] bg-[#f0f0f0] pl-0.5">
        <div className="flex items-start pt-2">
          <Group title="Технология обработки" className="h-[49px] w-[161px] pl-1 pr-0.5" legend="ml-0"><Combo big label="Технология обработки" value="Между двумя кромками" className="pt-px" /></Group>
          <Group title="Имя перехода" className="ml-[9px] h-[49px] w-[242px] pl-2 pr-1" legend="-ml-1"><Combo white label="Имя перехода" value="HSS_MC_faces" className="pt-[3px]" /></Group>
          <Group title="Шаблон" className="ml-1 h-[49px] w-[206px]">
            <div className="flex items-center gap-1.5 pl-3.5 pr-[3px]">
              <Tool label="Сохранить шаблон"><Disk w={16} /></Tool>
              <Tool label="Открыть шаблон"><Ic w={22}><path d="M1 18V6h5l1.500 2H14v3" fill="#c98a2b" stroke="#222" strokeWidth="1.3" /><path d="m1 18 4-7h14l-4 7z" fill="#f5bb55" stroke="#222" strokeWidth="1.3" /><path d="M9 4c2-3 7-3 9 1M18.500 1v5H14" fill="none" stroke="#222" strokeWidth="1.5" /></Ic></Tool>
              <input aria-label="Шаблон" readOnly className="h-[23px] min-w-0 flex-1 border border-[#e2e6ea] border-t-[#abadb3] bg-[#f0f0f0]" />
            </div>
          </Group>
          <div className="flex items-center gap-3 pl-2.5 pt-[14px]">
            <Tool label="Информация"><Ic w={14}><path d="M.5.5h19v19H.5z" fill="#4f9fc4" stroke="#2f6d8a" strokeWidth="1.5" /><path d="M10 3v3M10 8v7M8 16h4M8 8.500h2" stroke="#fff" strokeWidth="2.5" /></Ic></Tool>
            <Tool label="Показать"><Ic w={23}><path d="M1 1h14v14H1z" fill="#12c41d" stroke="#111" strokeWidth="1.3" /><path d="M8 1v10" stroke="#cfe8cf" strokeWidth="1.3" /><path d="M11 5h6v4h-6z" fill="#f3d24c" stroke="#333" /><path d="M3 15c4-4 10-3 16 2-6 2-11 2-16-2z" fill="#ccc" stroke="#111" strokeWidth="1.3" /><circle cx="12" cy="15.5" r="2.7" fill="#127a1a" /></Ic></Tool>
            <Tool label="Инструмент"><Ic w={24} className="-ml-1"><path d="M2 1.500h6v5L6.500 8h-3L2 6.500z" fill="#1ea82a" stroke="#222" /><path d="M3.500 8h3v7L5 16.500 3.500 15z" fill="#999" stroke="#222" /><path d="M11 3v12.500l3-2.500 2 4.500 2-1-2-4.500h3.500z" fill="#fff" stroke="#111" strokeWidth=".9" /></Ic></Tool>
          </div>
        </div>

        <div className="mt-[9px] flex items-start">
          <div className="pt-px">
            <StepTree />
            <button type="button" aria-label="Виды" className="ml-[14px] mt-2.5 grid size-5 grid-cols-2 gap-[3px] border border-[#c0c0c0] bg-[#c0c0c0]">
              <i className="bg-[#0a72b8]" /><i className="bg-[#14a0ff]" /><i className="bg-[#14a0ff]" /><i className="bg-[#14a0ff]" />
            </button>
          </div>
          <div className="ml-3 mt-1 h-[444px] w-[547px] rounded-[3px] border border-[#d5dfe5] shadow-[inset_1px_1px_#fff]">
            <label className="ml-auto mr-[19px] flex w-fit items-center gap-2.5 pt-px"><Tick on label="Режим" /><span>Режим</span></label>
            <div className="ml-[13px] mr-[38px] mt-[3px] grid h-[215px] grid-cols-[181px_163px] content-start justify-between gap-y-[25px] rounded-[3px] border border-[#d5dfe5] pl-3 pr-4 pt-2 shadow-[inset_1px_1px_#fff]">
              <Option t="Мульти-проходы" /><Option t="Обработка врезанием" />
              <Option t="Глубинная" /><Option t="Карман" />
              <Option t="Разворот" on /><Option t="Сортировка" />
              <Option t="Определение заготовки" /><Option t="Зеркало" />
            </div>
            <Group title="Соединение при смене слоя" className="ml-3 mr-[38px] mt-4 h-[111px] pl-4" legend="-ml-2.5">
              <div className="grid grid-cols-[84px_203px_134px] gap-x-[7px] gap-y-[3px] leading-[13px]">
                <p>Малые<br />перемещения:</p><Combo label="Малые перемещения" value="Безопасная область" className="pt-1.5" /><Combo label="Макрос малых" value="Без макроса" className="pt-1.5" />
                <p className="pt-0.5">Большие<br />перемещения:</p><Combo label="Большие перемещения" value="Безопасная область" className="pt-1.5" /><Combo label="Макрос больших" value="Без макроса" className="pt-1.5" />
              </div>
              <div className="mt-2.5 flex items-center">
                <label htmlFor="small" className="w-[227px]">Величина малых перемещений:</label>
                <input id="small" defaultValue="10" className="h-[22px] w-[60px] border border-[#e2e6ea] border-t-[#abadb3] bg-white pb-[3px] pl-1" />
              </div>
            </Group>
          </div>
        </div>

        <footer className="mt-auto flex items-center pb-2.5 pl-[14px] pr-11">
          <Tool label="Сохранить"><Disk /></Tool>
          <span className="ml-0.5 flex"><Tool label="Сохранить и рассчитать"><Disk extra="calc" w={20} /></Tool></span>
          <span className="mx-1 h-[26px] w-px bg-[#888]" />
          <div className="flex gap-1">
            <Tool label="Рассчитать всё"><Disk extra="calcd" w={20} /></Tool>
            <Tool label="Рассчитать и выйти"><Disk extra="monArrow" w={20} /></Tool>
            <Tool label="Рассчитать и копировать"><Disk extra="monPlus" w={20} /></Tool>
          </div>
          <span className="ml-1 mr-2 h-[26px] w-px bg-[#888]" />
          <Tool label="Симуляция"><Stack gold w={22} /></Tool>
          <span className="mx-1.5 h-[26px] w-px bg-[#888]" />
          <div className="ml-[3px] flex gap-2 text-[10px] font-bold leading-[11px]">
            <button type="button" className="text-left">G01<br /><span className="pl-[3px]">G00</span></button>
            <button type="button" className="relative text-left">G0<br /><span className="pl-[3px]">G00</span>
              <svg viewBox="0 0 10 10" width="10" height="10" className="absolute -right-0.5 -top-1"><circle cx="5" cy="5" r="4.3" fill="#e8f2e8" stroke="#555" /><path d="m3 7 3-4M5 3h2v2" fill="none" stroke="#1a9a22" strokeWidth="1.4" /></svg>
            </button>
          </div>
          <div className="ml-auto flex gap-1">
            <Tool label="Сохранить и копировать"><Disk extra="plus" /></Tool>
            <Tool label="Сохранить и выйти"><Disk extra="arrow" w={20} /></Tool>
            <Tool label="Выход"><Ic w={22}><path d="M5 6V1.500h13v17H5V14" fill="none" stroke="#333" strokeWidth="2.2" /><path d="M1 8h7V4l7 6-7 6v-4H1z" fill="#e02525" stroke="#911" /></Ic></Tool>
          </div>
        </footer>
      </div>
    </section>
  );
}

/* ---------- 3D viewport drawing ---------- */
function Scene() {
  return (
    <svg viewBox="401 64 1519 1100" preserveAspectRatio="xMinYMin slice" className="absolute inset-0 size-full" aria-hidden="true">
      <defs>
        <linearGradient id="boxG" x1="0" y1="0" x2="0" y2="1"><stop offset="0" stopColor="#b0b0b8" /><stop offset=".3" stopColor="#9c9da3" /><stop offset=".7" stopColor="#87868c" /><stop offset="1" stopColor="#6d6c72" /></linearGradient>
        <linearGradient id="rim"><stop offset="0" stopColor="#626367" /><stop offset=".4" stopColor="#85878a" /><stop offset=".62" stopColor="#606264" /><stop offset=".78" stopColor="#505153" /><stop offset=".92" stopColor="#6c6d71" /><stop offset="1" stopColor="#55565a" /></linearGradient>
        <linearGradient id="rib" x1="0" y1="0" x2=".35" y2="1"><stop offset="0" stopColor="#3c3d40" /><stop offset=".4" stopColor="#48494b" /><stop offset=".75" stopColor="#626567" /><stop offset="1" stopColor="#505153" /></linearGradient>
        <linearGradient id="bore"><stop offset="0" stopColor="#55575a" /><stop offset=".5" stopColor="#7d7f80" /><stop offset="1" stopColor="#4d4e50" /></linearGradient>
        <linearGradient id="wall" x1="0" y1="0" x2="1" y2="1"><stop offset="0" stopColor="#8a8c90" /><stop offset="1" stopColor="#5d5f62" /></linearGradient>
      </defs>
      <path d="M1288 222 1719 665 1695 989 1199 1164H958L589 785 613 461Z" fill="url(#boxG)" />
      <path d="M1719 665 1695 989 1199 1164h-173L1047 901Z" fill="#76757b" opacity=".25" />
      <g fill="none" stroke="#111" strokeWidth="1.4">
        <path d="M1288 222 1719 665 1695 989 1199 1164M958 1164 589 785 613 461 1288 222 1265 530M589 785 666 757M1529 820 1695 989" />
      </g>
      <g transform="translate(740 420) scale(.523 .4337)" stroke="#232427" strokeWidth="1.3" strokeLinejoin="round">
        <g className="[&_*]:[vector-effect:non-scaling-stroke]">
          {/* base ring */}
          <path d="M60 760 55 890C60 1200 400 1475 840 1475 1200 1475 1500 1240 1503 960L1511 830C1510 760 1480 660 1436 595L900 500 300 600Z" fill="url(#rim)" />
          <path d="M60 770C90 900 130 970 190 1050 330 1240 580 1345 850 1345 1150 1345 1440 1200 1495 940 1525 840 1500 700 1436 595L900 400 200 700Z" fill="#55565a" />
          <path d="M85 770C100 900 160 1010 260 1095 400 1240 600 1310 850 1310 1150 1310 1490 1110 1492 830 1490 740 1460 640 1430 596L900 400 200 700Z" fill="#47484c" />
          {/* left lower wall */}
          <path d="M212 770C170 870 150 930 145 960L140 990C165 1030 190 1055 225 1085 240 990 290 870 360 770Z" fill="url(#wall)" />
          <path d="M212 770C160 870 145 960 138 998L108 935" fill="none" />
          {/* back ribs */}
          <path d="M440 145 580 90C660 80 710 140 780 205 720 205 660 225 640 262 600 195 530 140 450 143Z" fill="url(#rib)" />
          <path d="M947 240C1040 205 1120 200 1180 212 1280 235 1345 310 1366 375 1270 290 1130 295 1055 325L1030 338C1020 300 990 262 947 240Z" fill="#3f4043" />
          {/* left arch */}
          <path d="M440 143C540 140 640 215 642 275 640 300 625 300 622 345 615 375 600 385 590 390L440 484Z" fill="#515253" />
          <path d="M452 450 460 330C470 282 515 280 527 310L578 378 450 456Z" fill="#6b6c6f" />
          <path d="M452 450 460 346 527 310 578 378Z" fill="#595a5a" />
          <path d="M622 240 600 280M642 262 612 285M640 300 605 325M622 345 588 355M612 368 590 390" fill="none" />
          {/* hub plate */}
          <path d="M780 202C720 205 660 225 640 258 650 290 622 320 622 345 615 375 605 380 602 390 610 430 650 470 686 490 730 488 760 505 810 512 840 514 860 525 862 530 930 525 970 500 992 475 985 440 1010 420 1010 390 1010 355 1015 345 1030 338 1020 300 990 262 947 240 900 242 870 225 830 218 800 215 790 208 780 202Z" fill="#3f4043" />
          <ellipse cx="816" cy="367" rx="60" ry="43" fill="url(#bore)" />
          {/* front left rib */}
          <path d="M440 484 602 390C610 430 650 470 686 490L662 500C600 525 520 585 440 665Z" fill="#45464a" />
          {/* right arch */}
          <path d="M1030 338C1130 300 1280 285 1370 375 1415 430 1440 510 1436 595L1243 673 1180 760 1040 520 992 475C985 440 1005 400 1012 370Z" fill="#585959" />
          <path d="M1036 505 1070 493 1140 465C1165 450 1180 446 1200 447 1240 452 1250 490 1251 520L1243 673C1270 740 1290 810 1255 895 1220 780 1160 700 1140 700Z" fill="#636566" />
          <path d="M1068 493 1140 463 1134 540Z" fill="#3f4043" />
          <path d="M1200 447 1251 520" fill="none" />
          <path d="M1138 700C1200 760 1245 830 1256 890L1222 968C1200 850 1165 770 1138 700Z" fill="#96969c" />
          <path d="M1243 673 1428 596M1365 375C1405 440 1430 510 1428 596" fill="none" />
          <path d="M1012 385 1035 405M992 430 1018 465M1030 338 1045 378M1050 330 1060 365" fill="none" />
          {/* front arch face */}
          <path d="M225 1085C245 950 330 790 450 655 530 575 600 525 662 500L686 490C760 492 780 510 810 512 840 514 860 525 862 530 990 680 1075 850 1098 1080 1110 1180 1112 1250 1112 1290L1105 1303 1070 1282 961 1130 400 1030 260 1092Z" fill="#5b5b5b" />
          <path d="M260 1092 443 1015C560 1110 700 1150 840 1145 880 1145 920 1140 961 1130L1070 1265V1282C1000 1300 930 1310 850 1310 600 1310 400 1240 260 1092Z" fill="#4a4b50" />
          <path d="M443 1015 453 860C460 790 500 740 560 708L666 663C690 655 705 658 722 663 750 676 780 677 800 680 825 684 840 695 848 703L925 800C955 850 971 900 971 945L961 1130C920 1140 880 1145 840 1145 680 1145 560 1110 443 1015Z" fill="#84848a" />
          <path d="M670 560 666 663C690 655 705 658 722 663 750 676 780 677 800 680 825 684 840 695 848 703L853 610 800 570 727 550Z" fill="url(#bore)" />
          <path d="M727 550 723 663M802 570 797 680M662 500 670 545M686 490 690 520M742 498 735 525M807 512 806 545M862 530 845 560M878 548 860 570" fill="none" />
          {/* right rib */}
          <path d="M862 530C930 525 970 500 992 475 1100 600 1190 770 1222 968 1240 1080 1245 1180 1243 1232 1200 1255 1160 1272 1112 1285 1112 1060 1040 700 862 530Z" fill="url(#rib)" />
          <path d="M992 475 1030 515C1110 620 1200 830 1230 1020 1245 1110 1250 1180 1250 1205L1243 1248C1243 1100 1230 830 992 475Z" fill="#5a5c5d" />
          <path d="M845 570C960 690 1040 880 1070 1090" fill="none" />
          <path d="M450 655C520 590 600 530 650 510M355 778C290 880 240 990 225 1085" fill="none" />
        </g>
        {/* tool path */}
        <g fill="#8000ff" stroke="none">
          <path d="M215 1145C235 1040 280 900 370 790 450 660 560 590 660 530 690 515 715 517 740 525 780 540 815 540 830 545 850 555 860 568 870 585 960 740 1070 980 1100 1345L1072 1315C1060 1150 1010 960 940 800 900 720 860 640 830 585 790 575 750 568 720 560 690 555 670 562 650 572 560 620 490 690 440 760 350 870 280 1000 250 1130Z" />
          <path d="M1015 465C1020 420 1035 400 1040 375 1060 350 1130 335 1200 333 1330 330 1455 430 1471 612H1463C1440 470 1350 368 1200 373 1130 375 1080 395 1062 405L1055 430C1045 460 1035 480 1040 498 1150 600 1268 880 1284 1200L1278 1245C1265 960 1180 690 1020 490Z" />
          <path d="M440 156C530 165 600 225 615 275 600 320 602 350 592 375 585 392 570 398 560 402L440 470V463L560 395C570 385 570 370 572 350 580 325 590 300 590 290 560 240 510 200 440 192Z" />
          <path d="M580 85C690 72 730 130 790 193 830 213 860 211 920 232 1000 198 1100 188 1170 205 1240 218 1290 270 1312 308 1280 270 1240 228 1170 212 1100 196 1000 206 920 237 860 217 830 219 785 200 730 145 680 90 580 88Z" />
          <path d="M183 770C150 850 125 900 99 1008 120 930 145 870 188 770Z" />
        </g>
        <g fill="none" stroke="#a78ad0" strokeWidth="2" strokeDasharray="2 9">
          <path d="M455 725C520 650 580 600 650 555M440 745C520 660 580 610 650 562M380 820C330 900 290 960 270 1010M395 825C350 890 310 950 285 990M840 570C870 620 900 680 925 740M535 195C570 220 590 250 605 285M1045 380 1030 460" />
        </g>
      </g>
      <path d="M905 757 1047 901 1719 665M1047 901 1026 1164" fill="none" stroke="#0b0b0b" strokeWidth="1.6" />
      <g fill="none" stroke="#ff0000" strokeWidth="1.2">
        <path d="M936 64 931 157M1042 64 1009 467M1495 64 1454 583M1555 64 1508 660M1464 274 1411 940M1354 304 1303 960M853 157V150L859 157M804 757 801 806M864 757 854 886" />
      </g>
      <path d="M801 806 799 832M854 886 852 916M1508 654 1507 685M1303 960 1301 990M1411 940 1408 970" stroke="#22e83a" strokeWidth="1.2" />
      <circle cx="1464" cy="274" r="5" fill="#e01010" stroke="#700" />
      <g strokeLinecap="round">
        <path d="M1168 562 1171 516" stroke="#0000d8" strokeWidth="4" /><path d="m1171 508-5 17h10z" fill="#0010ff" />
        <path d="M1168 562 1140 533" stroke="#c01010" strokeWidth="4" /><path d="m1131 524 14 7-8 7z" fill="#c01010" />
        <path d="M1168 562 1125 579" stroke="#10d010" strokeWidth="4" /><path d="m1111 583 16-10 3 8z" fill="#10e010" />
        <circle cx="1168" cy="563" r="4" fill="#f01010" />
      </g>
      <g className="font-['DejaVu_Sans',sans-serif] text-[9px] font-bold">
        <text x="1168" y="506" fill="#2030f0">Z</text><text x="1122" y="523" fill="#e01010">X</text><text x="1098" y="589" fill="#10e010">Y</text>
      </g>
      <text x="1169" y="563" fill="#ffff20" className="font-['Open_Sans',sans-serif] text-[18px]">1-1</text>
      <path d="m441 1107 2-16" stroke="#1010a8" strokeWidth="3.5" /><path d="m443 1083-5 10h9z" fill="#2020ff" />
      <path d="m441 1106-12-11" stroke="#901010" strokeWidth="3.5" /><path d="m424 1089 9 3-5 6z" fill="#b01515" />
      <path d="m441 1107-16 5" stroke="#106010" strokeWidth="3.5" /><path d="m413 1115 12-8 1 7z" fill="#50b850" />
      <g className="font-['Liberation_Serif',serif] text-[14px]">
        <text x="438" y="1082" fill="#0000ff">Z</text><text x="418" y="1090" fill="#ff0000">X</text><text x="408" y="1120" fill="#008000">Y</text>
      </g>
    </svg>
  );
}

function Markup() {
  return (
    <svg viewBox="0 0 1920 1200" preserveAspectRatio="xMinYMin slice" className="pointer-events-none absolute inset-0 z-30 size-full" aria-hidden="true">
      <defs><filter id="sh"><feDropShadow dx="2" dy="2" stdDeviation="1.5" floodOpacity=".45" /></filter></defs>
      <g fill="none" stroke="#f80a0a" strokeWidth="2.8" strokeLinejoin="round" strokeLinecap="round" filter="url(#sh)">
        <path d="M455 36C448 38 432 42 427 50 425 60 432 72 443 82 450 88 458 87 465 84 474 78 477 66 473 56 469 46 460 39 451 38" />
        <path d="M504 61C499 70 499 80 507 91" strokeWidth="3" /><path d="M492 78C498 78 504 72 504 61" strokeWidth="3" />
        <path d="M304 157 352 163 398 179 417 195 423 217 423 238 418 247 403 250 360 254 290 264 250 263 240 257 228 230 222 212 224 200 238 192 285 179 320 177 347 178 357 184" />
        <path d="M380 195 390 191 402 191 408 200 404 212 404 217 420 217 439 212" />
        <path d="M323 275 335 282 345 292 347 303 337 306 325 303 315 293 317 285 323 283" />
        <path d="M362 291 373 289 380 291 384 298 382 304 393 309 403 318 403 323 400 330 392 331" />
      </g>
      <path d="m332 233 10 11" stroke="#f2cf2c" strokeWidth="4" />
      <path d="m341 241 8-3 9 3 6 9-3 10-8 3-10-6-3-8z" fill="#a81820" stroke="#6a0d12" /><path d="m346 241 10 17M352 240l8 14" stroke="#dd5a5a" />
    </svg>
  );
}

const menus = ["Файл", "Правка", "Вид", "Вставка", "Инструменты", "Окно", "Справка"];

function WindowButtons({ tone }: { tone: string }) {
  return (
    <>
      <Tool label="Свернуть"><Ic w={14}><path d="M3 14h14v4H3z" fill={tone} /></Ic></Tool>
      <Tool label="Восстановить"><Ic w={14}><path d="M6 7V2h12v10h-5M1.500 7.500H13V18H1.500z" fill="none" stroke={tone} strokeWidth="2" /></Ic></Tool>
      <Tool label="Закрыть"><Ic w={14}><path d="m3 2 14 16M17 2 3 18" stroke={tone} strokeWidth="2.2" /></Ic></Tool>
    </>
  );
}

export default function App() {
  return (
    <div className={`relative flex h-screen flex-col overflow-hidden bg-[#f7f7f7] text-[11px] text-black ${UI}`}>
      <header className="flex h-[31px] shrink-0 items-center border-b border-[#888]">
        <div className="ml-2.5 flex h-full w-[145px] shrink-0 items-center gap-1 border-x border-[#888] bg-linear-to-r from-white via-white to-[#e4e4e4] pl-1.5">
          <svg viewBox="0 0 28 28" width="28" height="28" aria-hidden="true">
            <path d="M9 2c7-2 10 1 6 5l-5 3c4 1 5 3 3 7-2 5-6 8-12 9 5-4 7-8 9-12" fill="none" stroke="#d9251d" strokeWidth="2.2" />
            <path d="M27 12c-6-2-10-1-10 2 0 4 8 5 6 9-1 2-5 2-9 2" fill="none" stroke="#d9251d" strokeWidth="2.4" />
          </svg>
          <span className="text-[16px] italic text-[#d9251d]"><b>SOLID</b>WORKS</span>
        </div>
        <nav className="ml-[27px] flex items-center gap-4">
          {menus.map((m) => <button key={m} type="button">{m}</button>)}
        </nav>
        <Ic w={14} className="ml-6"><path d="m12 1 7 7-2 .5-4 4-.5 4-4-4L1 19l6.500-7.500-4-4 4-.5 4-4z" fill="#2d7da8" /></Ic>
        <div className="ml-2 flex h-full items-center gap-[5px] border-l border-[#999] pl-[15px]">
          <Tool label="Новый"><NewDoc /></Tool><Caret className="w-[9px]" />
          <Tool label="Открыть"><OpenDoc /></Tool><Caret className="w-[9px]" />
          <Tool label="Сохранить"><Save /></Tool><Caret className="w-[9px]" />
          <Tool label="Печать"><Print /></Tool><Caret className="w-[9px]" />
          <Tool label="Отменить"><Undo /></Tool><Caret className="w-[9px]" />
          <Tool label="Повторить"><Redo /></Tool><Caret className="w-[9px]" />
          <Tool label="Перестроить"><Traffic /></Tool>
          <Tool label="Свойства"><ListIc /></Tool>
          <Tool label="Параметры"><Gear /></Tool><Caret className="w-[9px]" />
          <Tool label="Открыть папку"><BlueFolder kind="arrow" /></Tool>
          <Tool label="Недавние"><BlueFolder kind="clock" /></Tool>
          <Tool label="Закрыть документ"><CloseDoc /></Tool>
          <Tool label="Чертёж"><NewDoc /></Tool><Caret className="w-[9px]" />
          <Tool label="Настройка"><Wrench /></Tool>
        </div>
        <h2 className="ml-auto">КОЛЕСО</h2>
        <label className="ml-[198px] flex h-[23px] w-[248px] items-center border border-black bg-[#ebecf2] pl-1.5 pr-1">
          <Ic w={15}><path d="M0 0h20v20H0z" fill="#222" /><path d="m4 4 6 5-6 5M10 15h6" fill="none" stroke="#fff" strokeWidth="2" /></Ic>
          <input aria-label="Поиск команд" placeholder="Поиск команд" className="ml-1.5 min-w-0 flex-1 bg-transparent outline-none placeholder:text-[#777]" />
          <Ic w={17}><circle cx="12" cy="7.5" r="6" fill="#eaf6fc" stroke="#5a9cc0" strokeWidth="1.6" /><path d="m8 12-6 7" stroke="#3d7fa8" strokeWidth="2.6" /></Ic>
          <Caret className="ml-1 w-2" />
        </label>
        <div className="ml-2.5 mr-2 flex items-center gap-[11px]">
          <Ic w={18}><circle cx="9" cy="4.5" r="4" fill="#ccc" stroke="#888" /><path d="M3 19v-6c0-6 12-6 12 0v6z" fill="#c4c4c4" stroke="#888" /></Ic>
          <span className="flex items-center gap-2.5"><b className="text-[17px] leading-none text-[#333]">?</b><Caret /></span>
          <WindowButtons tone="#444" />
        </div>
      </header>

      <div className="flex h-[33px] shrink-0 items-center gap-1.5 border-b border-[#888] pl-1.5">
        <Ic w={20}><path d="M0 0h20v20H0z" fill="#c4c4c4" /><path d="m4 3 12 14M16 3 4 17" stroke="#fff" strokeWidth="2" /></Ic>
        <span className="ml-[13px] mr-[-2px] h-[26px] w-px bg-[#c8c8c8]" />
        {[0, 1, 2, 3].map((v) => <Tool key={v} label="Операция"><GreyPart v={v} /></Tool>)}
        <Tool label="iMachining"><RedI /></Tool><Caret />
        <Tool label="2.5D"><Slab /></Tool><Caret />
        {[0, 1, 2, 3].map((v) => <Tool key={v} label="Фрезерование"><Pocket v={v} /></Tool>)}
        <Tool label="Контур 3D"><Wave tag="b" /></Tool>
        <Tool label="HSR"><Wave /></Tool><Caret />
        <Tool label="HSM"><Wave /></Tool><Caret />
        <Tool label="HSS"><Wave /></Tool>
        <Tool label="Маркер"><Pen /></Tool><Caret />
        <Tool label="Рассчитать"><Calc /></Tool>
        <span className="-ml-0.5 h-[26px] w-px bg-[#c8c8c8]" />
        <span className="-ml-0.5 flex gap-1.5">
          <Tool label="Симуляция"><Sim /></Tool>
          <Tool label="G-код"><GCode /></Tool>
          <Tool label="Слои"><Stack /></Tool>
        </span>
      </div>

      <main className="flex min-h-0 flex-1">
        <aside className="relative z-10 flex w-[401px] shrink-0 flex-col border-r border-[#888] bg-[#f7f7f7]">
          <nav className="flex h-[22px] w-max shrink-0 items-stretch text-[#333]">
            {[["Сборка", "w-[57px]"], ["Расположение", "w-[98px]"], ["Эскиз", "w-[56px]"], ["Анализировать", "w-[100px]"]].map(([t, w]) => (
              <button key={t} type="button" className={`${w} whitespace-nowrap border-b border-r border-[#777] bg-[#d4d4d4]`}>{t}</button>
            ))}
            <button type="button" className="w-[133px] whitespace-nowrap border-b border-r border-[#888] bg-[#f7f7f7] font-bold text-[#333]">SolidCAM Переходы</button>
          </nav>
          <div className="mt-0.5 flex h-4 items-center justify-center border-y border-[#c4c4c4]"><i className="size-1.5 rounded-full border border-[#888] bg-[#ddd]" /></div>
          <div className="mt-1 flex border-b border-[#777]">
            {[
              <Ic key="a"><path d="M1 9 5 6l3 3v5l6-2v4l-6 3-7-6z" fill="#f0c030" stroke="#6a5510" /><path d="m8 4 5-2 5 3v6l-5 3-5-3z" fill="#5ba8ca" stroke="#1f4f68" /><path d="m8 4 5 3 5-3M13 7v7" fill="none" stroke="#1f4f68" /></Ic>,
              <PropIc key="b" />,
              <Ic key="c"><path d="M3 1v18M3 5h6M3 15h6M9 2h6v6H9zM10 11h7v7h-7zM15 5h3v6" fill="#eee" stroke="#444" strokeWidth="1.3" /></Ic>,
              <Ic key="d"><circle cx="10" cy="10" r="6" fill="none" stroke="#222" strokeWidth="1.6" /><path d="M10 0v20M0 10h20" stroke="#222" strokeWidth="1.6" /></Ic>,
              <Ball key="e" />,
              <Drill key="f" />,
            ].map((ic, i) => (
              <button key={i} type="button" aria-label={`Вкладка ${i + 1}`} className={`flex h-[26px] w-10 items-center justify-center border-r border-t border-[#777] ${i === 5 ? "-mb-px bg-[#f7f7f7]" : "bg-[#d4d4d4]"}`}>{ic}</button>
            ))}
          </div>
          <FeatureTree />
        </aside>

        <section className="relative flex min-w-0 flex-1 flex-col bg-linear-to-b from-white via-[#c4c3c2] to-[#6e6a68]">
          <Scene />
          <div className="relative flex h-[29px] items-center">
            <div className="ml-[469px] flex items-center gap-1.5">
              <button type="button" aria-label="Эскиз" className="-mr-[3px] flex size-[26px] items-center justify-center border border-[#555] bg-[#a8acb0]"><Ic><path d="M14 2H6c-3 0-3 1-3 3v9c0 3 1 4 4 4h2" fill="none" stroke="#2b6f92" strokeWidth="2" /><path d="M8 15c3-5 8-5 11 0-3 5-8 5-11 0z" fill="#fff" stroke="#222" /><circle cx="13.5" cy="15" r="2.5" fill="#222" /></Ic></button>
              {[0, 1, 2, 3, 4, 5, 6, 7, 8, 9, 10].map((v) => <Tool key={v} label="Вид"><Cube v={v} /></Tool>)}
              <Caret /><Tool label="Стиль отображения"><Cube v={11} /></Tool><Caret />
              <Tool label="Скрыть"><Cube v={12} /></Tool><Tool label="Видимость"><Cube v={13} /></Tool><Caret />
              <Tool label="Внешний вид"><Ball pencil /></Tool><Tool label="Сцена"><Cube v={15} /></Tool><Caret />
              {[16, 17, 18].map((v) => <Tool key={v} label="Инструмент"><Cube v={v} /></Tool>)}
            </div>
            <div className="ml-auto mr-3.5 flex items-center gap-3">
              <Tool label="Влево"><Ic w={14}><path d="M2 1h16v18H2z" fill="none" stroke="#888" strokeWidth="1.8" /><path d="M13 5v10l-7-5z" fill="#888" /></Ic></Tool>
              <Tool label="Вправо"><Ic w={14}><path d="M2 1h16v18H2z" fill="none" stroke="#888" strokeWidth="1.8" /><path d="M8 5v10l7-5z" fill="#888" /></Ic></Tool>
              <WindowButtons tone="#999" />
            </div>
          </div>
          <nav className="relative ml-auto mt-[22px] flex w-[26px] flex-col border-l border-t border-[#777]">
            {[
              <Ic key="a"><path d="M4 10v9h12v-9" fill="#fff" stroke="#444" strokeWidth="1.4" /><path d="M1 11 10 2l9 9" fill="none" stroke="#2b6f92" strokeWidth="2.6" /><path d="M8 12h4v7H8z" fill="#ddd" stroke="#444" /></Ic>,
              <Ic key="b"><path d="m2 5 4-3v13l-4 3zM7 5l4-3v13l-4 3zM12 5l4-3v13l-4 3z" fill="#eee" stroke="#444" strokeWidth="1.3" /></Ic>,
              <FolderIc key="c" />,
              <Ic key="d"><path d="M1.500 1.500h17v17h-17z" fill="#fff" stroke="#333" strokeWidth="1.3" /><path d="M4 4h8v3H4zM14 4h3v3h-3zM6 10h4v3h3v4H4v-4h2z" fill="#f2c21a" stroke="#553" /></Ic>,
              <Ball key="e" />,
              <PropIc key="f" />,
            ].map((ic, i) => (
              <button key={i} type="button" aria-label={`Панель ${i + 1}`} className={`flex h-6 items-center justify-center border-b border-[#777] ${i === 0 ? "bg-[#f7f7f7]" : "bg-[#d4d4d4]"}`}>{ic}</button>
            ))}
          </nav>
        </section>
      </main>

      <nav className="flex h-4 shrink-0 items-stretch border-b border-t border-[#888] leading-[13px]">
        <div className="ml-0.5 flex w-[65px] border-r border-[#777] bg-[#b4b4b4]">
          {["M5 4v8M11 4v8L6 8z", "M10 4v8L5 8z", "M6 4v8l5-4z", "M5 4v8l5-4zM11 4v8"].map((d, i) => (
            <button key={i} type="button" aria-label={`Лист ${i + 1}`} className="flex flex-1 items-center justify-center border border-[#999]"><svg viewBox="0 0 16 16" width="13" height="13"><path d={d} fill="#8a8a8a" stroke="#8a8a8a" /></svg></button>
          ))}
        </div>
        <button type="button" className="w-[68px] border-r border-[#777] pl-1 text-[11px] font-bold">Модель</button>
        <button type="button" className="w-[133px] border-r border-[#777] bg-[#d4d4d4] pr-2">Трехмерные виды</button>
      </nav>
      <footer className="mb-px flex h-[19px] shrink-0 items-center border-b border-[#555] pl-px">
        <span>SOLIDWORKS Premium 2018 x64 Edition</span>
        <span className="ml-auto mr-2">Определенный</span>
        <i className="h-4 w-2 border-x border-[#ccc]" />
        <span className="mx-1">Редактируется Сборка</span>
        <i className="ml-0.5 h-4 w-4 border-x border-[#ccc]" />
        <span className="ml-8">Настройка</span>
        <svg viewBox="0 0 8 8" width="8" height="8" className="ml-4"><path d="m1 6 3-4 3 4z" fill="#333" /></svg>
        <Ic w={18} className="ml-[68px] mr-0.5"><path d="m2 6 6-4 10 6v5l-6 5L2 11z" fill="#ddd" stroke="#444" strokeWidth="1.3" /><path d="m2 6 10 7 6-5M12 13v5" fill="none" stroke="#444" /><circle cx="10" cy="7" r="2" fill="#fff" stroke="#444" /></Ic>
      </footer>

      <Dialog />
      <Markup />
    </div>
  );
}
